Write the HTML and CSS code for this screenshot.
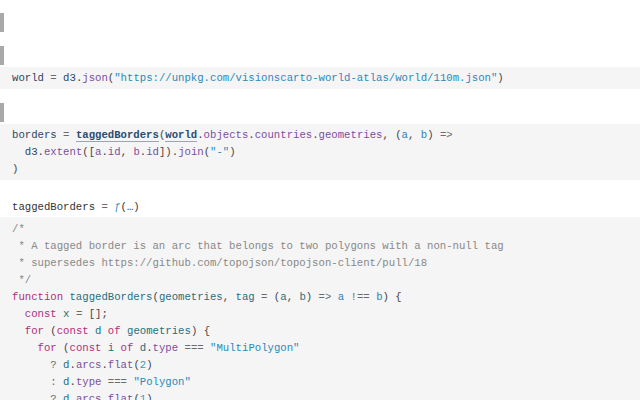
FILE: index.html
```html
<!DOCTYPE html>
<html>
<head>
<meta charset="utf-8">
<link rel="stylesheet" href="styles.css">
</head>
<body>
<div class="notebook">
  <div class="cell first">
    <div class="output pending"></div>
  </div>
  <div class="cell">
    <div class="output pending"></div>
    <pre class="code"><span class="df">world</span> <span class="op">=</span> <span class="vr">d3</span>.<span class="pr">json</span>(<span class="st">"https://unpkg.com/visionscarto-world-atlas/world/110m.json"</span>)</pre>
  </div>
  <div class="cell">
    <div class="output pending"></div>
    <pre class="code"><span class="df">borders</span> <span class="op">=</span> <span class="ref">taggedBorders</span>(<span class="ref">world</span>.<span class="pr">objects</span>.<span class="pr">countries</span>.<span class="pr">geometries</span>, (<span class="pa">a</span>, <span class="pa">b</span>) <span class="op">=&gt;</span>
  <span class="vr">d3</span>.<span class="pr">extent</span>([<span class="pa2">a</span>.<span class="pr">id</span>, <span class="pa2">b</span>.<span class="pr">id</span>]).<span class="pr">join</span>(<span class="st">"-"</span>)
)</pre>
  </div>
  <div class="cell">
    <div class="output text"><span class="name">taggedBorders</span> <span class="op">=</span> <span class="fn">ƒ</span>(…)</div>
    <pre class="code last"><span class="cm">/*
 * A tagged border is an arc that belongs to two polygons with a non-null tag
 * supersedes https://github.com/topojson/topojson-client/pull/18
 */</span>
<span class="kw">function</span> <span class="lv">taggedBorders</span>(<span class="lv">geometries</span>, <span class="lv">tag</span> <span class="op">=</span> (<span class="lv">a</span>, <span class="lv">b</span>) <span class="op">=&gt;</span> <span class="pa">a</span> <span class="op">!==</span> <span class="pa">b</span>) {
  <span class="kw">const</span> <span class="lv">x</span> <span class="op">=</span> [];
  <span class="kw">for</span> (<span class="kw">const</span> <span class="lv">d</span> <span class="kw">of</span> <span class="lv">geometries</span>) {
    <span class="kw">for</span> (<span class="kw">const</span> <span class="lv">i</span> <span class="kw">of</span> <span class="lv">d</span>.<span class="pr">type</span> <span class="op">===</span> <span class="st">"MultiPolygon"</span>
      <span class="op">?</span> <span class="lv">d</span>.<span class="pr">arcs</span>.<span class="pr">flat</span>(<span class="nm">2</span>)
      <span class="op">:</span> <span class="lv">d</span>.<span class="pr">type</span> <span class="op">===</span> <span class="st">"Polygon"</span>
      <span class="op">?</span> <span class="lv">d</span>.<span class="pr">arcs</span>.<span class="pr">flat</span>(<span class="nm">1</span>)</pre>
  </div>
</div>
</body>
</html>
```
FILE: styles.css
```css
html, body {
  margin: 0;
  padding: 0;
  background: #ffffff;
  overflow: hidden;
}
.notebook {
  display: flex;
  flex-direction: column;
  font-family: "Liberation Mono", "DejaVu Sans Mono", monospace;
  font-size: 10.65px;
  color: #333;
}
.cell {
  display: flex;
  flex-direction: column;
  margin-top: 14px;
}
.cell.first {
  margin-top: 13px;
}
.output {
  min-height: 19px;
}
.output.pending {
  border-left: 4px solid #a9a9ab;
}
.output.text {
  line-height: 17px;
  padding: 6px 12px 0 12px;
  margin-top: -1px;
  color: #333;
}
.code {
  margin: 2px 0 0 0;
  padding: 3px 12px 2px 12px;
  line-height: 17px;
  background: #f5f5f5;
  font-family: inherit;
  font-size: inherit;
  color: #444;
  white-space: pre;
}
.code.last {
  margin-top: -1px;
  padding-top: 4px;
}
.df { color: #2e4660; }
.vr { color: #2e4660; }
.op { color: #6a6a6a; }
.pr { color: #7b4f9e; }
.st { color: #2a8ab8; }
.nm { color: #3a9ab5; }
.kw { color: #b02f7c; }
.lv { color: #1f6f7d; }
.pa { color: #2f80b5; }
.pa2 { color: #7b4f9e; }
.cm { color: #888; }
.ref {
  color: #2b4c6f;
  font-weight: bold;
  border-bottom: 1px solid #9aa5b1;
}
.name { color: #333; }
.fn { color: #3c8fbf; }
```
